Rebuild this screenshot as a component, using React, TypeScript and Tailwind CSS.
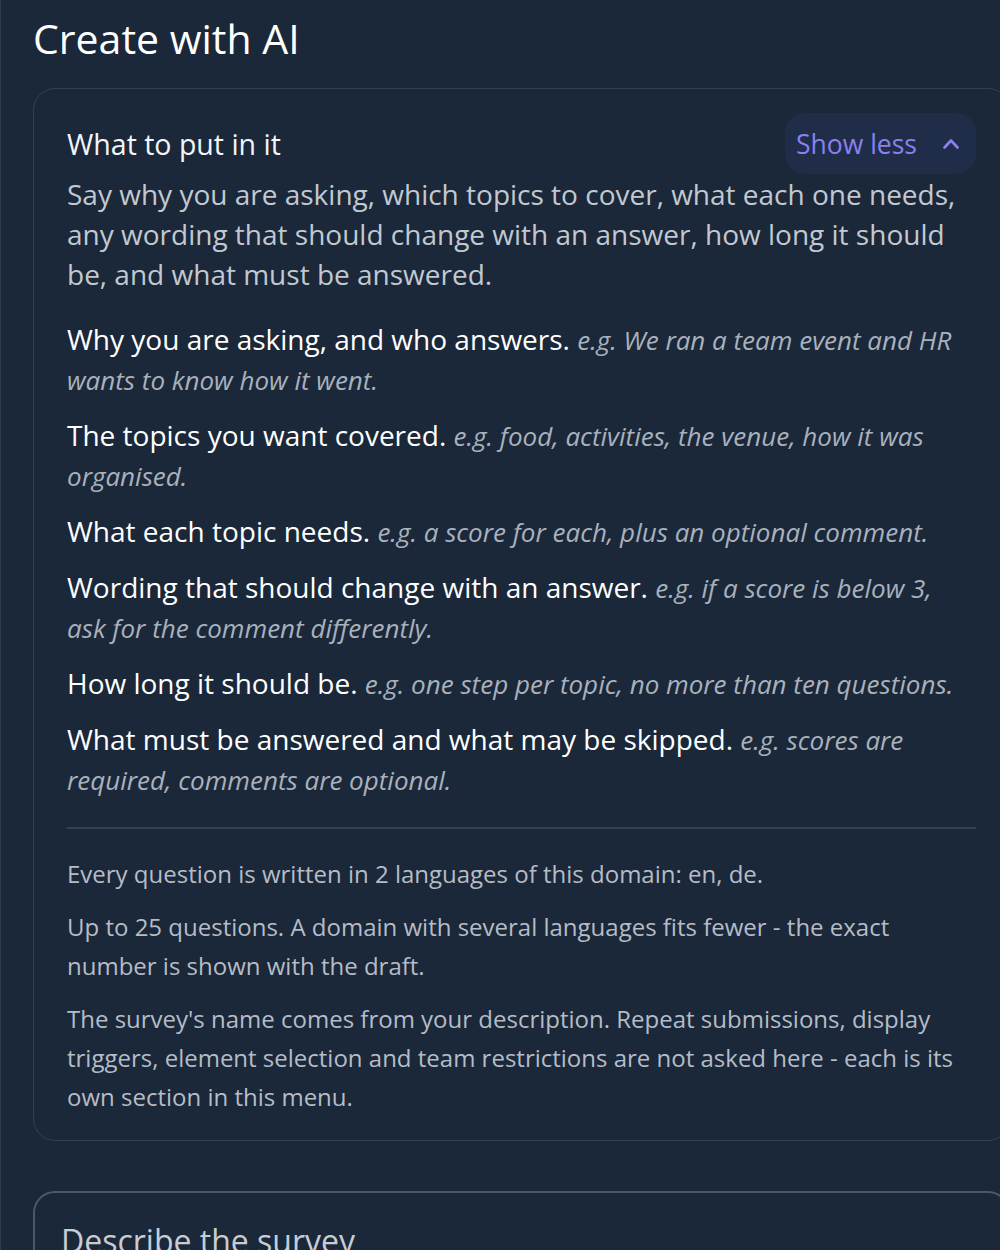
import React from "react";

const items: { lead: string; eg: string }[] = [
  { lead: "Why you are asking, and who answers.", eg: "e.g. We ran a team event and HR wants to know how it went." },
  { lead: "The topics you want covered.", eg: "e.g. food, activities, the venue, how it was organised." },
  { lead: "What each topic needs.", eg: "e.g. a score for each, plus an optional comment." },
  { lead: "Wording that should change with an answer.", eg: "e.g. if a score is below 3, ask for the comment differently." },
  { lead: "How long it should be.", eg: "e.g. one step per topic, no more than ten questions." },
  { lead: "What must be answered and what may be skipped.", eg: "e.g. scores are required, comments are optional." },
];

export default function App() {
  return (
    <div
      className="w-[1000px] h-[1250px] overflow-hidden bg-[#1a283a] border-l border-[#2e3c4d]"
      style={{ fontFamily: '"Open Sans", "Noto Sans", sans-serif' }}
    >
      <div className="w-[1041px] pl-[32px] pr-[32px] pt-[11px]">
        <h1 className="text-[41px] leading-[54px] text-white font-normal">Create with AI</h1>

        <section className="mt-[23px] rounded-[22px] border border-[#334153] px-[33px] pt-[24px] pb-[24px]">
          <div className="flex items-center justify-between h-[61px]">
            <h2 className="text-[28.5px] leading-[40px] text-[#f3f5f8] font-normal">What to put in it</h2>
            <button className="flex items-center h-[61px] rounded-[20px] bg-[#1f2d48] pl-[11px] pr-[17px] gap-[26px] text-[26.5px] text-[#8a80ef]">
              <span className="leading-[40px]">Show less</span>
              <svg width="16" height="11" viewBox="0 0 16 11" fill="none">
                <polyline points="1.5,9.5 8,2.5 14.5,9.5" stroke="#8a80ef" strokeWidth="2.6" strokeLinecap="round" strokeLinejoin="round" />
              </svg>
            </button>
          </div>

          <p className="text-[28px] leading-[40px] text-[#c3c8d0]">
            Say why you are asking, which topics to cover, what each one needs, any wording that should change with an answer, how long it should be, and what must be answered.
          </p>

          <div className="mt-[25px] flex flex-col gap-[16px]">
            {items.map((it) => (
              <p key={it.lead} className="text-[28px] leading-[40px] text-white">
                {it.lead}{" "}
                <em className="text-[26px] leading-[30px] text-[#a9b1bc]">{it.eg}</em>
              </p>
            ))}
          </div>

          <div className="mt-[28px] h-[2px] bg-[#334153]" />

          <div className="mt-[25px] flex flex-col gap-[14px] text-[24px] leading-[39px] text-[#b6bcc6]">
            <p>Every question is written in 2 languages of this domain: en, de.</p>
            <p>Up to 25 questions. A domain with several languages fits fewer - the exact number is shown with the draft.</p>
            <p>
              The survey's name comes from your description. Repeat submissions, display triggers, element selection and team restrictions are not asked here - each is its own section in this menu.
            </p>
          </div>
        </section>

        <section className="mt-[50px] rounded-[22px] border-2 border-[#4a5869] px-[26px] pt-[26px] pb-[24px]">
          <h3 className="text-[32px] leading-[44px] text-[#c8cdd4] font-normal">Describe the survey</h3>
          <div className="h-[200px]" />
        </section>
      </div>
    </div>
  );
}
